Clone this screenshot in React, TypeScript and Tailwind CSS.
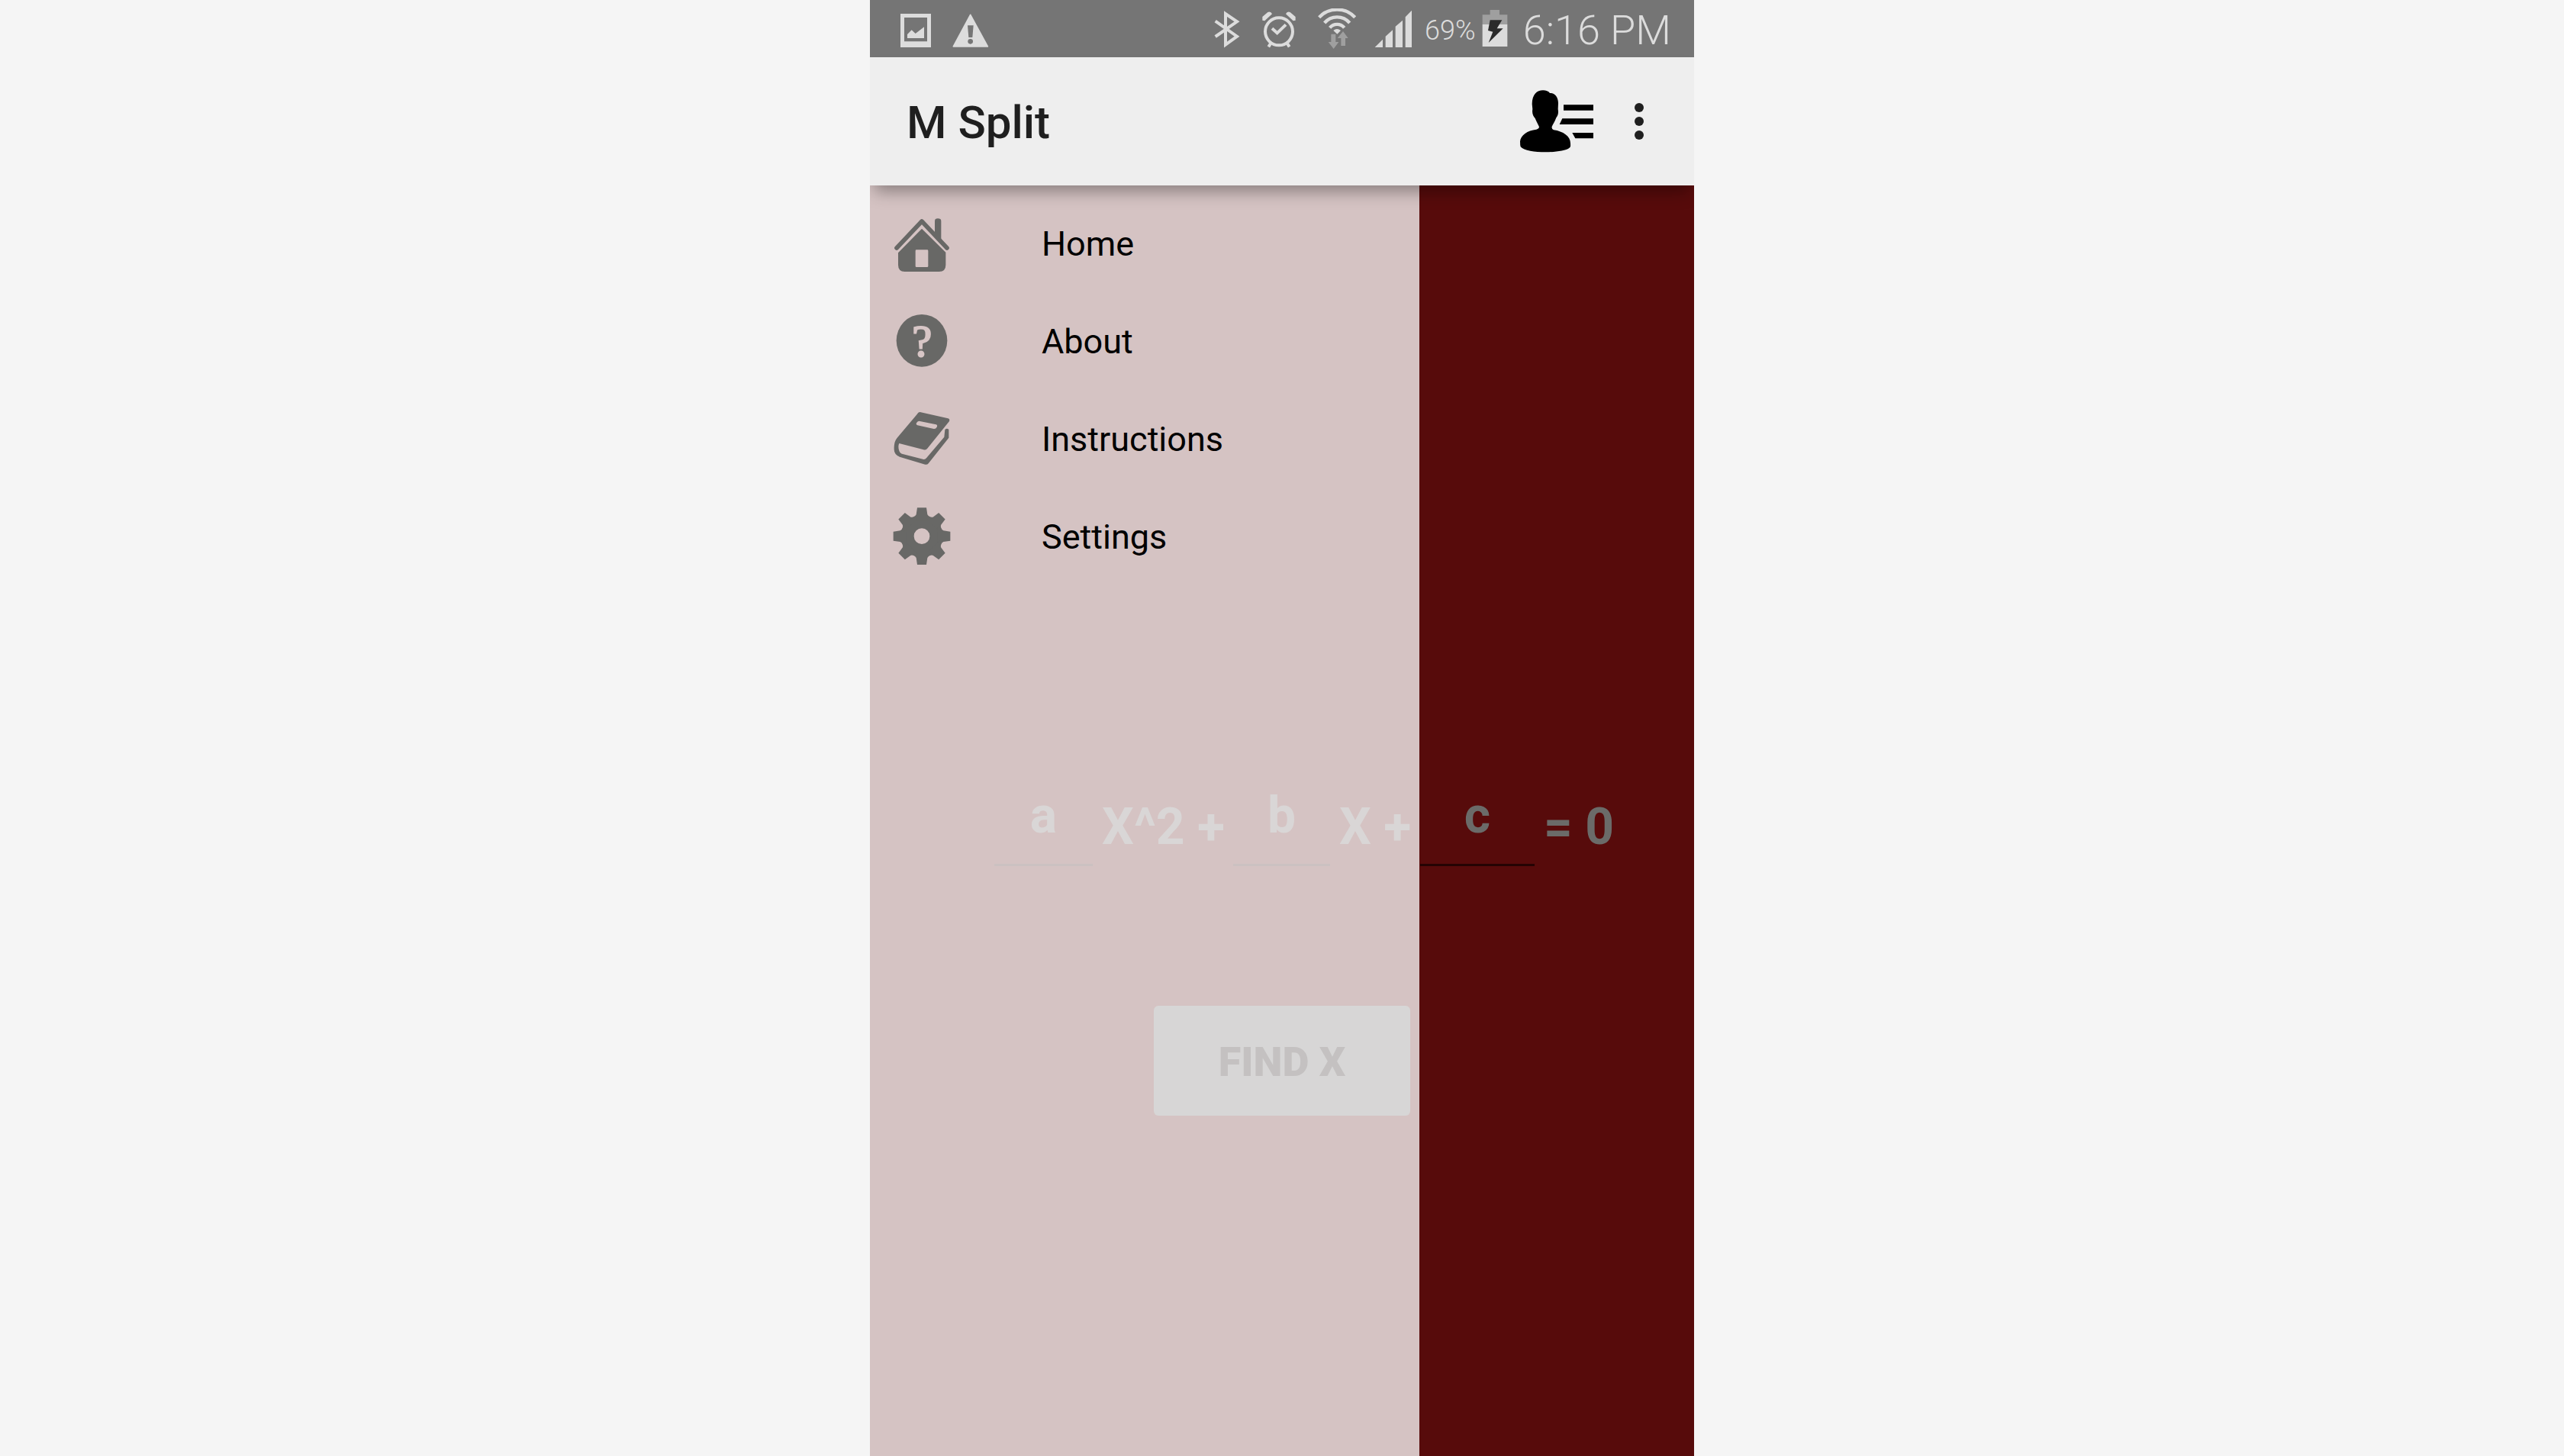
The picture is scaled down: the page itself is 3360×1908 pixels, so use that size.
import React from "react";

const LIGHT = "#dcdcdc";
const FAINT = "#9f9f9f";

function PictureIcon() {
  return (
    <svg className="h-11 w-10" viewBox="150 51 120 132" fill={LIGHT} aria-hidden="true">
      <path fillRule="evenodd" d="M150 51H270V183H150ZM165 66V160H255V66Z" />
      <path d="M177 132L194 115L209 129L243 103V147H177Z" />
    </svg>
  );
}

function WarningIcon() {
  return (
    <svg className="h-11 w-12" viewBox="355 51 144 132" aria-hidden="true">
      <path d="M426 55L494 180H359Z" fill={LIGHT} stroke={LIGHT} strokeWidth="5" strokeLinejoin="round" />
      <path d="M415 97H438L434 144H419Z" fill="#757575" />
      <circle cx="426" cy="160" r="10" fill="#757575" />
    </svg>
  );
}

function BluetoothIcon() {
  return (
    <svg className="h-[54px] w-[34px]" viewBox="89 33 102 162" fill="none" stroke={LIGHT} strokeWidth="12" aria-hidden="true">
      <path d="M94 83L179 143L134 176V54L179 85L94 144" />
    </svg>
  );
}

function AlarmIcon() {
  return (
    <svg className="h-[54px] w-[46px]" viewBox="285 33 138 162" fill="none" stroke={LIGHT} strokeWidth="12" aria-hidden="true">
      <circle cx="354" cy="124" r="54" />
      <path d="M327 112L347 130L381 97M322 170L313 184M386 170L395 184" />
      <path d="M289 80V66L310 48Q322 43 327 55L298 82ZM419 80V66L398 48Q386 43 381 55L410 82Z" fill={LIGHT} stroke="none" />
    </svg>
  );
}

function WifiIcon() {
  return (
    <svg className="h-[54px] w-[50px]" viewBox="504 33 150 162" fill="none" aria-hidden="true">
      <g stroke={LIGHT} strokeWidth="13">
        <path d="M509 68A97 97 0 0 1 650 68" />
        <path d="M530 90A65 65 0 0 1 629 90" />
        <path d="M551 109A37 37 0 0 1 608 109" />
      </g>
      <path d="M565 120Q579 108 594 120L580 134Z" fill={LIGHT} />
      <path d="M556 134H574V165H586L566 192L545 165H556Z" fill={FAINT} />
      <path d="M595 180V150H581L603 123L623 150H612V180Z" fill={FAINT} />
    </svg>
  );
}

function SignalIcon() {
  return (
    <svg className="h-[54px] w-[50px]" viewBox="720 33 150 162" fill={LIGHT} aria-hidden="true">
      <path d="M722 186L753 155V186ZM764 186V143L792 118V186ZM803 186V104L831 80V186ZM842 186V67L867 41V186Z" />
    </svg>
  );
}

function BatteryIcon() {
  return (
    <svg className="h-[54px] w-[34px]" viewBox="185 33 102 162" aria-hidden="true">
      <path d="M217 39H254V58H285V97H187V58H217Z" fill={FAINT} />
      <path d="M187 96H285V183H187Z" fill={LIGHT} />
      <path d="M217 79H264L244 112H268L211 168L228 125L209 120Z" fill="#2b2b2b" />
    </svg>
  );
}

function ContactIcon() {
  return (
    <svg className="h-[82px] w-24" viewBox="156 113 288 246" fill="#000" aria-hidden="true">
      <path d="M203 168C204 130 222 114 246 114C258 114 268 118 273 125C292 123 306 140 306 165L305 188C308 205 304 215 298 222C292 238 285 248 281 257Q279 266 288 270C325 275 354 295 354 322C354 330 356 336 350 340C335 352 290 357 255 357C215 357 170 352 158 336Q156 330 156 315C158 290 185 272 220 268Q231 265 231 258C228 250 222 240 215 224C208 216 202 205 205 188Z" />
      <path d="M327 171H444V193H327ZM322 225H444V248H311ZM361 281H444V303H373Z" />
    </svg>
  );
}

function MoreIcon() {
  return (
    <svg className="h-12 w-3" viewBox="0 0 12 48" fill="#1f1f1f" aria-hidden="true">
      <circle cx="6" cy="6" r="6" />
      <circle cx="6" cy="24" r="6" />
      <circle cx="6" cy="42" r="6" />
    </svg>
  );
}

function HomeIcon() {
  return (
    <svg className="size-[76px]" viewBox="111 126 228 228" fill="#686866" aria-hidden="true">
      <path d="M126 258L225 153L324 258" fill="none" stroke="#686866" strokeWidth="17" strokeLinecap="round" strokeLinejoin="round" />
      <path d="M276 205V152Q276 142 288 142Q301 142 301 152V230Z" />
      <path fillRule="evenodd" d="M225 182L319 275V325Q319 351 293 351H158Q132 351 132 325V277ZM204 265Q200 265 200 269V329Q200 333 204 333H246Q250 333 250 329V269Q250 265 246 265Z" />
    </svg>
  );
}

function AboutIcon() {
  return (
    <svg className="size-[76px]" viewBox="111 510 228 228" aria-hidden="true">
      <ellipse cx="225" cy="622" rx="100" ry="103" fill="#686866" />
      <text
        x="226"
        y="683"
        textAnchor="middle"
        fontSize="176"
        fontFamily="Liberation Serif, serif"
        fill="#d8c6c6"
        stroke="#d8c6c6"
        strokeWidth="6"
      >
        ?
      </text>
    </svg>
  );
}

function BookIcon() {
  return (
    <svg className="size-[76px]" viewBox="111 114 228 228" fill="#686866" aria-hidden="true">
      <path
        fillRule="evenodd"
        d="M218 123L328 148Q336 150 333 159L246 267Q240 273 232 271L136 246Q130 258 136 275Q139 285 150 288L232 309Q238 310 243 304L313 221L316 192Q324 185 331 192V224L251 325Q246 331 238 329L138 299Q116 290 116 270C116 250 118 235 130 222L206 132Q211 122 218 123ZM214 158Q208 158 204 166Q201 172 208 175L272 189Q280 190 284 182Q288 174 281 172Z"
      />
    </svg>
  );
}

const TEETH = [0, 45, 90, 135, 180, 225, 270, 315];

function GearIcon() {
  return (
    <svg className="size-[76px]" viewBox="111 498 228 228" fill="#686866" aria-hidden="true">
      <circle cx="225" cy="611" r="55" fill="none" stroke="#686866" strokeWidth="48" />
      {TEETH.map((angle) => (
        <path key={angle} d="M207 499H243L247 526Q249 532 262 538V550H188V538Q201 532 203 526Z" transform={`rotate(${angle} 225 611)`} />
      ))}
    </svg>
  );
}

const MENU = [
  { label: "Home", Icon: HomeIcon },
  { label: "About", Icon: AboutIcon },
  { label: "Instructions", Icon: BookIcon },
  { label: "Settings", Icon: GearIcon },
];

function StatusBar() {
  return (
    <div className="flex h-[75px] items-center justify-between bg-[#757575] pr-[30px] pl-10 text-[#dcdcdc]">
      <div className="flex items-center gap-7 pt-1">
        <PictureIcon />
        <WarningIcon />
      </div>
      <div className="flex items-center">
        <div className="flex items-center gap-7">
          <BluetoothIcon />
          <AlarmIcon />
          <WifiIcon />
        </div>
        <div className="ml-6 flex items-center gap-4">
          <SignalIcon />
          <span className="pt-1 text-[36px] leading-none font-light">69%</span>
        </div>
        <div className="ml-2 flex items-center gap-5">
          <BatteryIcon />
          <span className="pt-1 text-[54px] leading-none font-light">6:16 PM</span>
        </div>
      </div>
    </div>
  );
}

function AppBar() {
  return (
    <header className="relative z-20 flex h-[168px] items-center justify-between bg-[#eeeeee] pr-[66px] pl-12 shadow-[0_14px_20px_-6px_rgba(0,0,0,0.35)]">
      <h1 className="pt-1 text-[60px] leading-none font-medium text-[#1f1f1f]">M Split</h1>
      <div className="flex items-center gap-[54px]">
        <button type="button" aria-label="Contacts">
          <ContactIcon />
        </button>
        <button type="button" aria-label="More options">
          <MoreIcon />
        </button>
      </div>
    </header>
  );
}

function Coefficient({ name, width }: { name: string; width: string }) {
  return (
    <div className={width}>
      <input
        type="text"
        aria-label={`Coefficient ${name}`}
        placeholder={name}
        className="block h-[106px] w-full border-b-[3px] border-[#250303] bg-transparent pb-6 text-center text-[66px] leading-none font-bold placeholder:text-[#6b6b69] placeholder:opacity-100"
      />
    </div>
  );
}

function Solver() {
  return (
    <form className="flex flex-col items-center gap-[183px] pt-[786px]">
      <div className="flex w-full items-center pl-[163px] text-[66px] leading-none font-bold whitespace-nowrap text-[#6b6b69]">
        <Coefficient name="a" width="w-[129px]" />
        <span className="ml-3 w-[172px] pt-1">X^2 +</span>
        <Coefficient name="b" width="w-[127px]" />
        <span className="ml-3 w-[106px] pt-1">X +</span>
        <Coefficient name="c" width="w-[150px]" />
        <span className="ml-3 pt-1">= 0</span>
      </div>
      <button type="button" className="h-36 w-[336px] rounded-md bg-[#5f6b69] pt-1 text-[54px] leading-none font-black text-black">
        FIND X
      </button>
    </form>
  );
}

function Drawer() {
  return (
    <nav className="absolute inset-y-0 left-0 z-10 w-2/3 bg-[rgba(245,241,241,0.8)] pt-3">
      <ul>
        {MENU.map(({ label, Icon }) => (
          <li key={label}>
            <a href="#" className="flex h-32 items-center gap-[119px] pl-[30px] text-[45px] leading-none text-black">
              <Icon />
              {label}
            </a>
          </li>
        ))}
      </ul>
    </nav>
  );
}

export default function App() {
  return (
    <div className="min-h-screen bg-[#f5f5f5] font-[Roboto,sans-serif]">
      <div className="mx-auto flex min-h-screen w-full max-w-[1080px] flex-col overflow-hidden">
        <StatusBar />
        <AppBar />
        <main className="relative grow bg-[#570b0b]">
          <Solver />
          <Drawer />
        </main>
      </div>
    </div>
  );
}
